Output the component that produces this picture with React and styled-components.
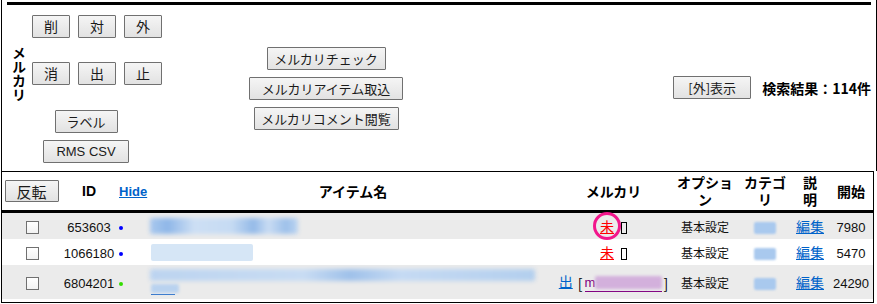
import React from 'react';
import styled, { createGlobalStyle } from 'styled-components';

const GlobalStyle = createGlobalStyle`
  html, body {
    margin: 0;
    padding: 0;
    background: #fff;
  }
  body {
    font-family: "Noto Sans CJK JP", "Liberation Sans", sans-serif;
    color: #111;
  }
`;

const Page = styled.div`
  width: 877px;
  padding-left: 1px;
  box-sizing: border-box;
`;

const TopPanel = styled.div`
  width: 876px;
  height: 171px;
  box-sizing: border-box;
  border-left: 1px solid #000;
  border-right: 1px solid #000;
  display: flex;
  flex-direction: column;
`;

const Rule = styled.div`
  height: 3px;
  background: #000;
  margin: 2px 5px 0;
  flex-shrink: 0;
`;

const Controls = styled.div`
  flex: 1;
  display: flex;
  align-items: flex-start;
`;

const SideLabel = styled.div`
  margin: 41px 0 0 10px;
  width: 14px;
  writing-mode: vertical-rl;
  font-size: 14px;
  font-weight: 700;
  line-height: 14px;
  color: #000;
`;

const LeftGroup = styled.div`
  margin: 10px 0 0 6px;
  width: 130px;
`;

const ButtonGrid = styled.div`
  display: grid;
  grid-template-columns: repeat(3, 38px);
  column-gap: 8px;
  row-gap: 24px;
`;

const SubStack = styled.div`
  width: 108px;
  margin-top: 25px;
  display: flex;
  flex-direction: column;
  align-items: center;
  gap: 7px;
`;

const Btn = styled.button`
  width: ${p => p.$w || 38}px;
  height: 23px;
  padding: 0;
  margin: 0;
  box-sizing: border-box;
  border: 1px solid #707070;
  border-radius: 1px;
  background: linear-gradient(#f5f5f5, #e2e2e2);
  font-family: "Noto Sans CJK JP", "Liberation Sans", sans-serif;
  font-size: ${p => p.$fs || 13}px;
  line-height: 21px;
  color: #1a1a1a;
  white-space: nowrap;
  cursor: pointer;
`;

const MiddleStack = styled.div`
  margin: 42px 0 0 87px;
  width: 154px;
  display: flex;
  flex-direction: column;
  align-items: center;
  gap: 7px;
`;

const RightGroup = styled.div`
  margin: 71px 5px 0 auto;
  display: flex;
  align-items: center;
  gap: 11px;
`;

const ResultText = styled.span`
  font-size: 14px;
  font-weight: 700;
  color: #000;
  white-space: nowrap;
`;

const Table = styled.table`
  width: 873px;
  table-layout: fixed;
  border: 1px solid #000;
  border-collapse: separate;
  border-spacing: 0;
  padding: 0 0 3px;
  font-size: 13px;
`;

const Th = styled.th`
  height: 38px;
  padding: 0;
  border-bottom: 3px solid #000;
  font-size: 14px;
  line-height: 17px;
  font-weight: 700;
  color: #000;
  vertical-align: middle;
  text-align: ${p => p.$align || 'center'};
  padding-left: ${p => p.$pl || 0}px;
`;

const Row = styled.tr`
  background: ${p => (p.$shade ? '#ebebeb' : '#fff')};
`;

const Td = styled.td`
  height: ${p => p.$h || 26}px;
  padding: 0;
  padding-left: ${p => p.$pl || 0}px;
  vertical-align: middle;
  text-align: ${p => p.$align || 'center'};
  white-space: nowrap;
  overflow: visible;
`;

const Check = styled.input.attrs({ type: 'checkbox' })`
  appearance: none;
  display: inline-block;
  width: 13px;
  height: 13px;
  margin: 0 0 0 2px;
  box-sizing: border-box;
  border: 1px solid #707070;
  background: linear-gradient(#fff, #f2f2f2);
  vertical-align: middle;
`;

const Num = styled.span`
  font-family: "Liberation Sans", Arial, sans-serif;
  font-size: 13px;
  color: #111;
`;

const Dot = styled.span`
  display: inline-block;
  width: 4px;
  height: 4px;
  border-radius: 50%;
  background: ${p => p.$color};
  vertical-align: middle;
`;

const Link = styled.a`
  color: ${p => p.$color || '#0062c9'};
  text-decoration: underline;
  font-size: ${p => p.$fs || 14}px;
  font-weight: ${p => (p.$bold ? 700 : 400)};
  cursor: pointer;
`;

const HideLink = styled(Link)`
  font-family: "Liberation Sans", Arial, sans-serif;
  font-size: 13px;
`;

const Blur = styled.span`
  display: block;
  width: ${p => p.$w}px;
  height: ${p => p.$h || 14}px;
  margin-left: ${p => p.$ml || 0}px;
  background: ${p => p.$bg || '#bcd4f0'};
  filter: blur(${p => p.$blur ?? 2}px);
  border-radius: 2px;
`;

const InlineBlur = styled(Blur)`
  display: inline-block;
  vertical-align: middle;
`;

const NameStack = styled.div`
  display: flex;
  flex-direction: column;
  gap: 3px;
`;

const NameLink = styled.span`
  display: block;
  width: 24px;
  margin-left: 1px;
  border-bottom: 1px solid #2a6fc9;
  padding-bottom: 1px;
`;

const Marked = styled.span`
  position: relative;
  display: inline-block;
  &::after {
    content: '';
    position: absolute;
    left: 50%;
    top: 50%;
    width: 28px;
    height: 28px;
    box-sizing: border-box;
    transform: translate(-50%, -50%);
    border: 3px solid #f2168c;
    border-radius: 50%;
  }
`;

const Tofu = styled.span`
  display: inline-block;
  width: 6px;
  height: 12px;
  margin-left: 7px;
  box-sizing: border-box;
  border: 1px solid #000;
  vertical-align: middle;
`;

const Bracketed = styled.span`
  display: inline-flex;
  align-items: center;
  margin-left: 5px;
  font-size: 14px;
  color: #000;
  vertical-align: middle;
`;

const PurpleLink = styled.span`
  display: inline-flex;
  align-items: center;
  width: 77px;
  margin: 0 2px;
  border-bottom: 1px solid #800080;
  color: #800080;
  font-family: "Liberation Sans", Arial, sans-serif;
  font-size: 13px;
  line-height: 16px;
`;

const Plain = styled.span`
  font-size: 12px;
  color: #111;
`;

const cols = [59, 56, 33, 406, 115, 68, 52, 38, 44];

const rows = [
  { id: '653603', dot: '#0000ff', shade: true, mark: true, start: '7980' },
  { id: '1066180', dot: '#0000ff', shade: false, start: '5470' },
  { id: '6804201', dot: '#33dd00', shade: true, listed: true, start: '24290' },
];

function ItemName({ index }) {
  if (index === 0) {
    return (
      <Blur
        $w={148}
        $h={16}
        $bg="linear-gradient(90deg, #a9c8ee 0%, #8fb7e8 12%, #cddff4 30%, #c6dbf3 55%, #94bae8 70%, #c9dcf3 80%, #9dc0ea 92%, #bdd5f1 100%)"
      />
    );
  }
  if (index === 1) {
    return <Blur $w={102} $h={17} $ml={1} $bg="#d6e6f6" $blur={0} />;
  }
  return (
    <NameStack>
      <Blur
        $w={385}
        $h={12}
        $bg="linear-gradient(90deg, #bcd4f0 0%, #c8dcf3 40%, #9fc1ea 52%, #c5daf3 65%, #b3cfee 100%)"
      />
      <NameLink>
        <Blur $w={28} $h={9} $bg="#b9d2ef" $blur={1.5} />
      </NameLink>
    </NameStack>
  );
}

function MercariCell({ row }) {
  if (row.listed) {
    return (
      <>
        <Link $fs={14}>出</Link>
        <Bracketed>
          [
          <PurpleLink>
            m
            <InlineBlur $w={68} $h={13} $bg="#d3b0dc" $blur={1.5} />
          </PurpleLink>
          ]
        </Bracketed>
      </>
    );
  }
  const mi = <Link $color="#ff0000">未</Link>;
  return (
    <>
      {row.mark ? <Marked>{mi}</Marked> : mi}
      <Tofu />
    </>
  );
}

export default function App() {
  return (
    <>
      <GlobalStyle />
      <Page>
        <TopPanel>
          <Rule />
          <Controls>
            <SideLabel>メルカリ</SideLabel>
            <LeftGroup>
              <ButtonGrid>
                {['削', '対', '外', '消', '出', '止'].map(c => (
                  <Btn key={c} $fs={14}>{c}</Btn>
                ))}
              </ButtonGrid>
              <SubStack>
                <Btn $w={63}>ラベル</Btn>
                <Btn $w={86} style={{ fontFamily: '"Liberation Sans", Arial, sans-serif' }}>
                  RMS CSV
                </Btn>
              </SubStack>
            </LeftGroup>
            <MiddleStack>
              <Btn $w={119}>メルカリチェック</Btn>
              <Btn $w={154}>メルカリアイテム取込</Btn>
              <Btn $w={145}>メルカリコメント閲覧</Btn>
            </MiddleStack>
            <RightGroup>
              <Btn $w={78}>[外]表示</Btn>
              <ResultText>検索結果：114件</ResultText>
            </RightGroup>
          </Controls>
        </TopPanel>

        <Table>
          <colgroup>
            {cols.map((w, i) => (
              <col key={i} style={{ width: w }} />
            ))}
          </colgroup>
          <thead>
            <tr>
              <Th>
                <Btn $w={54} $fs={15} style={{ height: 22 }}>反転</Btn>
              </Th>
              <Th style={{ fontFamily: '"Liberation Sans", Arial, sans-serif' }}>ID</Th>
              <Th $align="left" $pl={2}>
                <HideLink $bold>Hide</HideLink>
              </Th>
              <Th>アイテム名</Th>
              <Th>メルカリ</Th>
              <Th>オプショ<br />ン</Th>
              <Th>カテゴ<br />リ</Th>
              <Th>説<br />明</Th>
              <Th>開始</Th>
            </tr>
          </thead>
          <tbody>
            {rows.map((r, i) => (
              <Row key={r.id} $shade={r.shade}>
                <Td $h={i === 2 ? 34 : 26}>
                  <Check />
                </Td>
                <Td>
                  <Num>{r.id}</Num>
                </Td>
                <Td $align="left" $pl={2}>
                  <Dot $color={r.dot} />
                </Td>
                <Td $align="left">
                  <ItemName index={i} />
                </Td>
                <Td>
                  <MercariCell row={r} />
                </Td>
                <Td>
                  <Plain>基本設定</Plain>
                </Td>
                <Td>
                  <InlineBlur $w={22} $h={12} $bg="#a9c9ee" $blur={1.2} />
                </Td>
                <Td>
                  <Link>編集</Link>
                </Td>
                <Td>
                  <Num>{r.start}</Num>
                </Td>
              </Row>
            ))}
          </tbody>
        </Table>
      </Page>
    </>
  );
}
